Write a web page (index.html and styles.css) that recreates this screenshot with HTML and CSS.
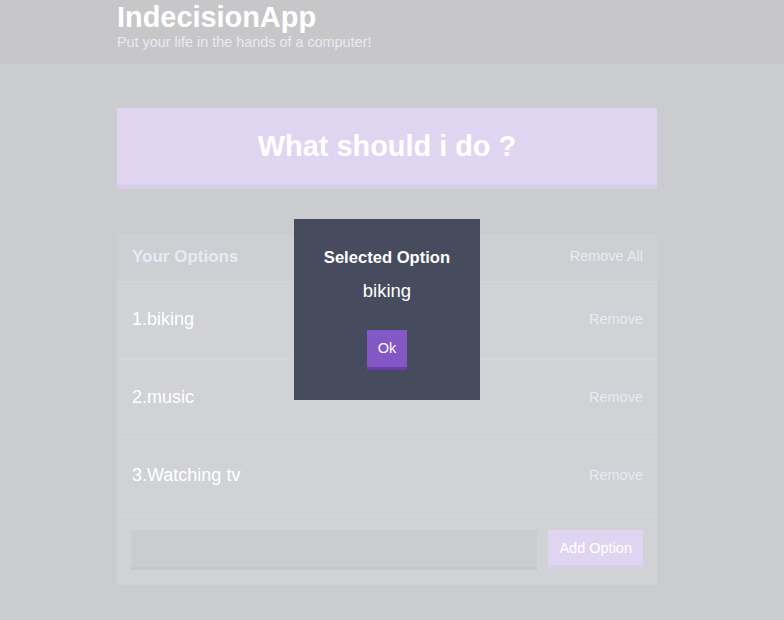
FILE: index.html
```html
<!DOCTYPE html>
<html lang="en">
<head>
<meta charset="utf-8">
<title>IndecisionApp</title>
<link rel="stylesheet" href="styles.css">
</head>
<body>
<header class="header">
  <div class="container">
    <h1 class="header__title">IndecisionApp</h1>
    <h2 class="header__subtitle">Put your life in the hands of a computer!</h2>
  </div>
</header>
<main class="main">
  <div class="container">
    <button class="big-button">What should i do ?</button>
    <div class="widget">
      <div class="widget-header">
        <h3 class="widget-header__title">Your Options</h3>
        <button class="button--link">Remove All</button>
      </div>
      <div class="option">
        <p class="option__text">1.biking</p>
        <button class="button--link">Remove</button>
      </div>
      <div class="option">
        <p class="option__text">2.music</p>
        <button class="button--link">Remove</button>
      </div>
      <div class="option">
        <p class="option__text">3.Watching tv</p>
        <button class="button--link">Remove</button>
      </div>
      <form class="add-option">
        <input class="add-option__input" type="text" name="option">
        <button class="button" type="button">Add Option</button>
      </form>
    </div>
  </div>
</main>
<div class="overlay">
  <div class="modal">
    <h3 class="modal__title">Selected Option</h3>
    <p class="modal__body">biking</p>
    <button class="button button--ok">Ok</button>
  </div>
</div>
</body>
</html>
```
FILE: styles.css
```css
html, body {
  margin: 0;
  padding: 0;
}
body {
  background: #333745;
  font-family: "Liberation Sans", Arial, sans-serif;
  min-height: 620px;
}
.container {
  max-width: 540px;
  margin: 0 auto;
}
.header {
  background: #20222b;
  color: #fff;
  padding: 1px 10px 14px 0;
}
.header__title {
  font-size: 28.9px;
  line-height: 33px;
  font-weight: bold;
  margin: 0;
}
.header__subtitle {
  font-size: 14.4px;
  line-height: 16px;
  font-weight: normal;
  color: #a5afd7;
  margin: 0;
}
.main {
  padding: 44px 10px 0 0;
}
.big-button {
  display: block;
  width: 100%;
  height: 81px;
  box-sizing: border-box;
  background: #8357c5;
  border: none;
  border-bottom: 5px solid #6a3fa8;
  color: #fff;
  font-family: "Liberation Sans", Arial, sans-serif;
  font-size: 28.9px;
  font-weight: bold;
  padding: 0;
  margin: 0 0 45px 0;
}
.widget {
  background: #464b5e;
}
.widget-header {
  background: #3c4251;
  display: flex;
  justify-content: space-between;
  align-items: center;
  height: 47px;
  padding: 0 14px 2px 15px;
  box-sizing: border-box;
  height: 48px;
  border-bottom: 1px solid #575d74;
}
.widget-header__title {
  font-size: 17px;
  line-height: 20px;
  font-weight: bold;
  color: #a5afd7;
  margin: 0;
}
.button--link {
  background: none;
  border: none;
  color: #a5afd7;
  font-family: "Liberation Sans", Arial, sans-serif;
  font-size: 14.5px;
  line-height: 17px;
  padding: 0;
}
.option {
  display: flex;
  justify-content: space-between;
  align-items: center;
  padding: 27px 14px 29px 15px;
  border-bottom: 1px solid #575d74;
}
.option__text {
  font-size: 18px;
  line-height: 21px;
  color: #fff;
  margin: 0;
}
.add-option {
  display: flex;
  align-items: flex-start;
  gap: 11px;
  padding: 14px 14px 15px 14px;
  margin: 0;
}
.add-option__input {
  flex-grow: 1;
  min-width: 0;
  height: 40px;
  box-sizing: border-box;
  background: #333745;
  border: none;
  border-bottom: 3px solid #1d1f27;
  color: #a5afd7;
  padding: 8px;
  outline: none;
}
.button {
  background: #8357c5;
  border: none;
  border-bottom: 3px solid #6a3fa8;
  color: #fff;
  font-family: "Liberation Sans", Arial, sans-serif;
  font-size: 14.5px;
  height: 38px;
  box-sizing: border-box;
  padding: 0 11px;
}
.overlay {
  position: fixed;
  top: 0;
  left: 0;
  right: 0;
  bottom: 0;
  background: rgba(255, 255, 255, 0.75);
  display: flex;
  align-items: center;
  justify-content: center;
  padding: 0 10px 1px 0;
}
.modal {
  background: #464b5e;
  color: #fff;
  padding: 30px;
  text-align: center;
}
.modal__title {
  font-size: 16.6px;
  line-height: 18px;
  font-weight: bold;
  margin: 0 0 13px 0;
}
.modal__body {
  font-size: 18.5px;
  line-height: 21px;
  margin: 0 0 29px 0;
}
.button--ok {
  height: 40px;
  padding: 0 11px;
  line-height: 37px;
}
```
